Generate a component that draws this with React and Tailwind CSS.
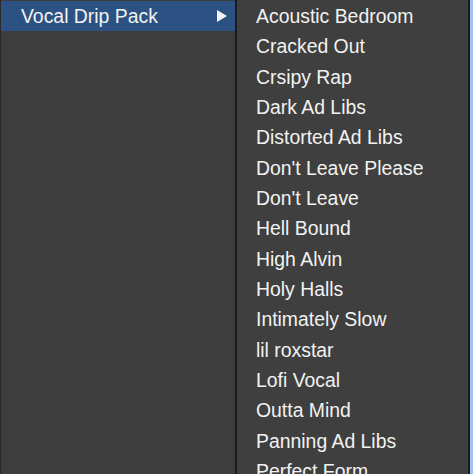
import React from "react";

const items = [
  "Acoustic Bedroom",
  "Cracked Out",
  "Crsipy Rap",
  "Dark Ad Libs",
  "Distorted Ad Libs",
  "Don't Leave Please",
  "Don't Leave",
  "Hell Bound",
  "High Alvin",
  "Holy Halls",
  "Intimately Slow",
  "lil roxstar",
  "Lofi Vocal",
  "Outta Mind",
  "Panning Ad Libs",
  "Perfect Form",
];

const font = { fontFamily: '"Liberation Sans", Arial, sans-serif' };

export default function App() {
  return (
    <div
      className="w-[473px] h-[474px] overflow-hidden flex bg-[#9fc3ee] text-[19.4px] text-[#f2f2f2]"
      style={font}
    >
      {/* parent menu */}
      <div className="w-[235px] h-full bg-[#3d3d3d] border-l border-[#2a2a2a] pt-px">
        <div className="h-[30px] flex items-center justify-between bg-[#2b5283] pl-5 pr-[8px]">
          <span className="leading-none pt-px">Vocal Drip Pack</span>
          <svg width="10" height="12" viewBox="0 0 10 12">
            <path d="M0 0 L10 6 L0 12 Z" fill="#f5f5f5" />
          </svg>
        </div>
      </div>

      <div className="w-[2px] h-full bg-[#1c1c1c]" />

      {/* submenu */}
      <div className="w-[231px] h-full bg-[#3f3f3f] pt-px overflow-hidden">
        {items.map((name) => (
          <div key={name} className="h-[30.35px] flex items-center pl-[19px] whitespace-nowrap">
            <span className="leading-none pt-px">{name}</span>
          </div>
        ))}
      </div>

      <div className="w-[2px] h-full bg-[#1c1c1c]" />
    </div>
  );
}
